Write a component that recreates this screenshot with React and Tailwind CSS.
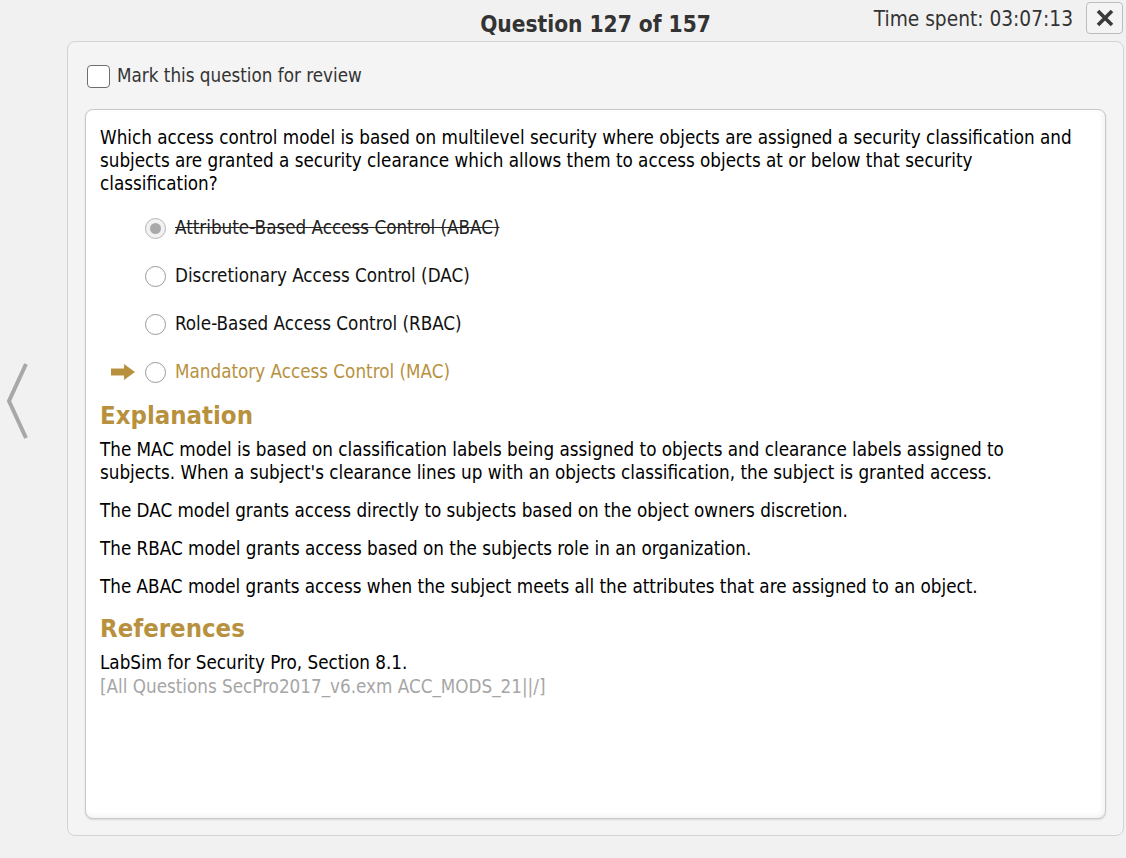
import React from 'react';

const font = { fontFamily: '"DejaVu Sans Condensed", "DejaVu Sans", sans-serif' };

const options = [
  { label: 'Attribute-Based Access Control (ABAC)', state: 'struck' },
  { label: 'Discretionary Access Control (DAC)', state: 'plain' },
  { label: 'Role-Based Access Control (RBAC)', state: 'plain' },
  { label: 'Mandatory Access Control (MAC)', state: 'correct' },
];

const explanation = [
  "The MAC model is based on classification labels being assigned to objects and clearance labels assigned to subjects. When a subject's clearance lines up with an objects classification, the subject is granted access.",
  'The DAC model grants access directly to subjects based on the object owners discretion.',
  'The RBAC model grants access based on the subjects role in an organization.',
  'The ABAC model grants access when the subject meets all the attributes that are assigned to an object.',
];

function Arrow() {
  return (
    <svg width="24" height="16" viewBox="0 0 24 16">
      <path d="M0 4.5h13V0l11 8-11 8v-4.5H0z" fill="#b8913f" />
    </svg>
  );
}

function Radio({ state }) {
  if (state === 'struck') {
    return (
      <span className="w-[21px] h-[21px] rounded-full border border-[#b5b5b5] bg-[#f2f2f2] flex items-center justify-center shrink-0">
        <span className="w-[11px] h-[11px] rounded-full bg-[#a9a9a9]"></span>
      </span>
    );
  }
  return <span className="w-[21px] h-[21px] rounded-full border border-[#9a9a9a] bg-white shrink-0"></span>;
}

function Option({ label, state }) {
  const textCls =
    state === 'struck'
      ? 'line-through text-[#222]'
      : state === 'correct'
      ? 'text-[#b8913f]'
      : 'text-[#111]';
  return (
    <div className="h-[48px] flex items-center">
      <div className="w-[45px] flex justify-end pr-[10px]">{state === 'correct' && <Arrow />}</div>
      <Radio state={state} />
      <span className={`ml-[9px] text-[18.7px] ${textCls}`}>{label}</span>
    </div>
  );
}

export default function App() {
  return (
    <div className="w-[1126px] h-[858px] bg-[#f1f1f1] flex overflow-hidden" style={font}>
      <div className="w-[67px] shrink-0 flex justify-start pl-[5px] pt-[362px]">
        <svg width="24" height="78" viewBox="0 0 24 78">
          <path d="M21 2L4 39l17 37" fill="none" stroke="#a8a8a8" strokeWidth="4" />
        </svg>
      </div>

      <div className="flex-1 flex flex-col pr-[2px]">
        <div className="h-[41px] grid grid-cols-[1fr_auto_1fr] items-start">
          <div></div>
          <div className="pt-[8px] text-[22.5px] font-bold text-[#333]">Question 127 of 157</div>
          <div className="flex justify-end items-start gap-[13px] pt-[2px] pr-[1px]">
            <span className="pt-[2px] text-[20.7px] text-[#333]">Time spent: 03:07:13</span>
            <button className="w-[37px] h-[32px] rounded-[4px] border border-[#bdbdbd] bg-[#f4f4f4] flex items-center justify-center">
              <svg width="18" height="18" viewBox="0 0 18 18">
                <path d="M2 2L16 16M16 2L2 16" stroke="#3a3a3a" strokeWidth="3.6" />
              </svg>
            </button>
          </div>
        </div>

        <div className="h-[795px] rounded-[8px] border border-[#d4d4d4] bg-[#f4f4f4] flex flex-col px-[17px] pb-[16px]">
          <label className="flex items-center gap-[7px] pl-[2px] pt-[2px] h-[67px] shrink-0">
            <span className="w-[23px] h-[23px] rounded-[4px] border border-[#6e6e6e] bg-white"></span>
            <span className="text-[18.7px] text-[#333]">Mark this question for review</span>
          </label>

          <div className="flex-1 rounded-[8px] border border-[#c9c9c9] bg-white shadow-[inset_-2px_-2px_5px_rgba(0,0,0,0.06),0_1px_2px_rgba(0,0,0,0.12)] pl-[14px] pr-[30px] pt-[16px]">
            <p className="text-[18.7px] leading-[23px] text-black">
              Which access control model is based on multilevel security where objects are assigned a security classification and subjects are granted a security clearance which allows them to access objects at or below that security classification?
            </p>

            <div className="mt-[9px]">
              {options.map((o) => (
                <Option key={o.label} {...o} />
              ))}
            </div>

            <h2 className="mt-[4px] text-[25.5px] leading-[30px] font-bold text-[#b8913f]">Explanation</h2>
            <div className="mt-[8px] flex flex-col gap-[15px]">
              {explanation.map((t) => (
                <p key={t} className="text-[18.7px] leading-[23px] text-black">
                  {t}
                </p>
              ))}
            </div>

            <h2 className="mt-[15px] text-[25.5px] leading-[30px] font-bold text-[#b8913f]">References</h2>
            <p className="mt-[8px] text-[18.7px] leading-[24px] text-black">LabSim for Security Pro, Section 8.1.</p>
            <p className="text-[18.7px] leading-[24px] text-[#a6a6a6]">[All Questions SecPro2017_v6.exm ACC_MODS_21||/]</p>
          </div>
        </div>
      </div>
    </div>
  );
}
